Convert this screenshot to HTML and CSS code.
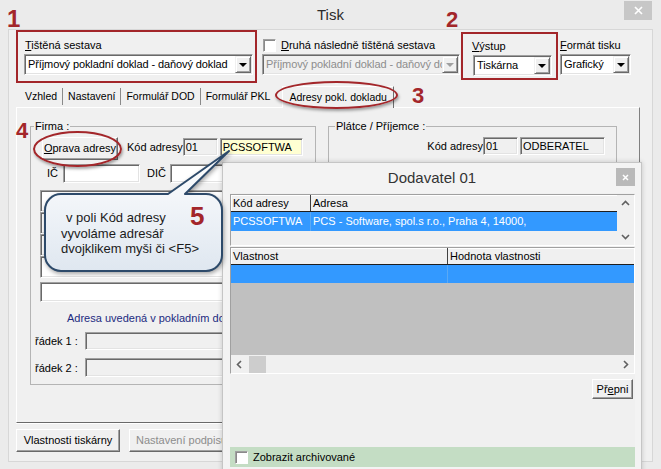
FILE: index.html
```html
<!DOCTYPE html>
<html lang="cs">
<head>
    <meta charset="UTF-8">
    <title>Tisk</title>
    <link rel="stylesheet" href="styles.css">
</head>
<body>
    <div class="window">
        <div class="titlebar">
            <span class="title">Tisk</span>
            <span class="close-btn main-close">
                <svg width="9" height="9" viewBox="0 0 9 9"><path d="M1 1 L8 8 M8 1 L1 8" stroke="#fff" stroke-width="1.7"/></svg>
            </span>
        </div>

        <div class="client">
            <div class="top-row">
                <div class="mark-box report">
                    <div class="caption"><u>T</u>ištěná sestava</div>
                    <div class="combo"><span class="combo-text">Příjmový pokladní doklad - daňový doklad</span><span class="drop"></span></div>
                </div>
                <div class="second">
                    <div class="caption check-caption"><span class="check"></span><u>D</u>ruhá následně tištěná sestava</div>
                    <div class="combo disabled"><span class="combo-text">Příjmový pokladní doklad - daňový do</span><span class="drop"></span></div>
                </div>
                <div class="mark-box output">
                    <div class="caption"><u>V</u>ýstup</div>
                    <div class="combo"><span class="combo-text">Tiskárna</span><span class="drop"></span></div>
                </div>
                <div class="format">
                    <div class="caption"><u>F</u>ormát tisku</div>
                    <div class="combo"><span class="combo-text">Grafický</span><span class="drop"></span></div>
                </div>
            </div>

            <div class="tabs">
                <div class="tab">Vzhled</div>
                <div class="tab">Nastavení</div>
                <div class="tab">Formulář DOD</div>
                <div class="tab last">Formulář PKL</div>
                <div class="tab active">Adresy pokl. dokladu</div>
            </div>

            <div class="panel">
                <div class="groups">
                    <fieldset class="group firma">
                        <legend>Firma :</legend>
                        <div class="row first-row">
                            <div class="btn btn-oprava"><u>O</u>prava adresy</div>
                            <span class="lbl lbl-kod">Kód adresy</span>
                            <div class="edit gray e-code">01</div>
                            <div class="edit yellow e-name">PCSSOFTWA</div>
                        </div>
                        <div class="row ic-row">
                            <span class="lbl lbl-ic">IČ</span>
                            <div class="edit e-ic"></div>
                            <span class="lbl lbl-dic">DIČ</span>
                            <div class="edit e-dic"></div>
                        </div>
                        <div class="memo">
                            <div class="edit tall"></div>
                            <div class="edit tall"></div>
                            <div class="edit tall"></div>
                            <div class="edit tall"></div>
                        </div>
                        <div class="edit single"></div>
                        <div class="note">Adresa uvedená v pokladním dokladu</div>
                        <div class="row line-row">
                            <span class="lbl lbl-line">řádek 1 :</span>
                            <div class="edit gray e-line"></div>
                        </div>
                        <div class="row line-row second-line">
                            <span class="lbl lbl-line">řádek 2 :</span>
                            <div class="edit gray e-line h19"></div>
                        </div>
                    </fieldset>

                    <fieldset class="group platce">
                        <legend>Plátce / Příjemce :</legend>
                        <div class="row first-row right">
                            <span class="lbl lbl-kod2">Kód adresy</span>
                            <div class="edit gray e-code">01</div>
                            <div class="edit gray e-name2">ODBERATEL</div>
                        </div>
                    </fieldset>
                </div>
            </div>

            <div class="bottom">
                <div class="btn btn-printer">Vlastnosti tiskárny</div>
                <div class="btn btn-sign disabled-text">Nastavení podpisu</div>
            </div>
        </div>
    </div>

    <!-- oznaceni v obrazku -->
    <span class="num n1">1</span>
    <span class="num n2">2</span>
    <span class="num n3">3</span>
    <span class="num n4">4</span>
    <span class="oval oval-tab"></span>
    <span class="oval oval-oprava"></span>

    <div class="dialog">
        <div class="dlg-title">
            Dodavatel 01
            <span class="close-btn dlg-close">
                <svg width="7" height="7" viewBox="0 0 7 7"><path d="M1 1 L6 6 M6 1 L1 6" stroke="#fff" stroke-width="1.5"/></svg>
            </span>
        </div>
        <div class="dlg-client">
            <div class="grid grid-addr">
                <div class="grid-body">
                    <div class="g-head">
                        <div class="g-cell c-code">Kód adresy</div>
                        <div class="g-cell">Adresa</div>
                    </div>
                    <div class="g-row selected">
                        <div class="g-cell c-code">PCSSOFTWA</div>
                        <div class="g-cell">PCS - Software, spol.s r.o., Praha 4, 14000,</div>
                    </div>
                </div>
                <div class="vscroll">
                    <span class="arrow"><svg width="17" height="17" viewBox="0 0 17 17"><polyline points="5,10 8.5,6.5 12,10" fill="none" stroke="#606060" stroke-width="1.6"/></svg></span>
                    <span class="arrow"><svg width="17" height="17" viewBox="0 0 17 17"><polyline points="5,7 8.5,10.5 12,7" fill="none" stroke="#606060" stroke-width="1.6"/></svg></span>
                </div>
            </div>

            <div class="grid grid-props">
                <div class="g-head">
                    <div class="g-cell c-prop">Vlastnost</div>
                    <div class="g-cell">Hodnota vlastnosti</div>
                </div>
                <div class="g-row selected short">
                    <div class="g-cell c-prop"></div>
                    <div class="g-cell"></div>
                </div>
                <div class="g-empty"></div>
                <div class="hscroll">
                    <span class="arrow"><svg width="17" height="17" viewBox="0 0 17 17"><polyline points="10,5 6.5,8.5 10,12" fill="none" stroke="#606060" stroke-width="1.6"/></svg></span>
                    <span class="thumb"></span>
                    <span class="spacer"></span>
                    <span class="arrow"><svg width="17" height="17" viewBox="0 0 17 17"><polyline points="7,5 10.5,8.5 7,12" fill="none" stroke="#606060" stroke-width="1.6"/></svg></span>
                </div>
            </div>

            <div class="dlg-actions">
                <div class="btn btn-switch">Př<u>e</u>pni</div>
            </div>

            <div class="archive-bar">
                <span class="check"></span>
                <span>Zobrazit archivované</span>
            </div>
        </div>
    </div>

    <div class="callout">
        <svg class="callout-shape" width="200" height="140" viewBox="0 0 200 140">
            <defs>
                <linearGradient id="calloutFill" x1="0" y1="0" x2="0" y2="1">
                    <stop offset="0" stop-color="#ffffff"/>
                    <stop offset="1" stop-color="#dfe7f0"/>
                </linearGradient>
            </defs>
            <path d="M21 54 H128 L189 11 L145 54 H166 A16 16 0 0 1 182 70 V115 A16 16 0 0 1 166 131 H21 A16 16 0 0 1 5 115 V70 A16 16 0 0 1 21 54 Z"
                  fill="url(#calloutFill)" stroke="#2d4a6a" stroke-width="2" stroke-linejoin="round"/>
        </svg>
        <div class="callout-text">
            <div class="indent">v poli Kód adresy</div>
            <div>vyvoláme adresář</div>
            <div>dvojklikem myši či &lt;F5&gt;</div>
        </div>
        <span class="callout-num">5</span>
    </div>
</body>
</html>
```

FILE: styles.css
```css
* {
    margin: 0;
    padding: 0;
    box-sizing: border-box;
}

body {
    width: 661px;
    height: 469px;
    overflow: hidden;
    position: relative;
    font-family: "Liberation Sans", Arial, sans-serif;
    font-size: 11px;
    color: #000;
    background: #ebebeb;
}

u {
    text-decoration: underline;
}

/* hlavni okno */
.window {
    height: 469px;
    display: flex;
    flex-direction: column;
}

.titlebar {
    height: 29px;
    position: relative;
    text-align: center;
}

.title {
    font-size: 15px;
    line-height: 29px;
    color: #2b2b2b;
}

.close-btn {
    position: absolute;
    display: flex;
    align-items: center;
    justify-content: center;
}

.main-close {
    left: 624px;
    top: 1px;
    width: 28px;
    height: 19px;
    background: #c7c7c7;
}

.client {
    flex: 1;
    margin: 0 8px 7px;
    background: #f0f0f0;
    border: 1px solid #d7d7d7;
}

/* horni radek */
.top-row {
    display: flex;
    align-items: flex-start;
    height: 53px;
}

.mark-box {
    border: 2px solid #a3262a;
}

.caption {
    height: 13px;
    line-height: 13px;
    margin-bottom: 2px;
    white-space: nowrap;
}

.report {
    margin-left: 7px;
    width: 241px;
    height: 53px;
    padding: 7px 2px 0 6px;
}

.report .caption {
    padding-left: 1px;
}

.second {
    margin-left: 5px;
    width: 198px;
    padding-top: 9px;
}

.check-caption {
    display: flex;
    align-items: center;
}

.check {
    display: inline-block;
    width: 13px;
    height: 13px;
    background: #fff;
    border: 1px solid;
    border-color: #a0a0a0 #fff #fff #a0a0a0;
    box-shadow: inset 1px 1px 0 #8a8a8a;
}

.check-caption .check {
    margin: 0 5px 0 1px;
}

.output {
    margin-left: 1px;
    margin-top: 2px;
    width: 97px;
    height: 48px;
    padding: 6px 0 0 10px;
}

.output .caption {
    margin-left: -1px;
}

.output .combo {
    width: 79px;
}

.format {
    margin-left: 2px;
    width: 71px;
    padding-top: 9px;
}

.combo {
    display: flex;
    height: 21px;
    background: #fff;
    border: 1px solid;
    border-color: #a0a0a0 #fff #fff #a0a0a0;
    padding: 1px;
    box-shadow: inset 1px 1px 0 #696969, inset -1px -1px 0 #e3e3e3;
}

.combo-text {
    flex: 1;
    line-height: 17px;
    padding-left: 2px;
    letter-spacing: -0.1px;
    white-space: nowrap;
    overflow: hidden;
}

.drop {
    width: 16px;
    height: 17px;
    flex-shrink: 0;
    background: #f0f0f0;
    border: 1px solid;
    border-color: #f0f0f0 #696969 #696969 #f0f0f0;
    box-shadow: inset 1px 1px 0 #fff, inset -1px -1px 0 #a0a0a0;
    display: flex;
    align-items: center;
    justify-content: center;
}

.drop::after {
    content: "";
    border-left: 4px solid transparent;
    border-right: 4px solid transparent;
    border-top: 4px solid #000;
    margin-top: 1px;
}

.combo.disabled {
    background: #f0f0f0;
}

.combo.disabled .combo-text {
    color: #8d8d8d;
}

.combo.disabled .drop::after {
    border-top-color: #a0a0a0;
}

/* zalozky */
.tabs {
    display: flex;
    align-items: flex-end;
    height: 24px;
    margin-left: 11px;
    font-size: 10.5px;
}

.tab {
    height: 17px;
    line-height: 17px;
    padding: 0 5px;
    margin-bottom: 2px;
    border-right: 1px solid #8a8a8a;
    white-space: nowrap;
}

.tab.last {
    border-right: none;
}

.tab.active {
    height: 22px;
    line-height: 20px;
    margin-left: 7px;
    margin-bottom: -1px;
    padding: 0 6px;
    background: #f0f0f0;
    border: 1px solid;
    border-color: #fff #6e6e6e transparent #fff;
    border-bottom: none;
    position: relative;
    z-index: 1;
}

.panel {
    margin-left: 7px;
    width: 624px;
    height: 316px;
    border: 1px solid;
    border-color: #fff #808080 #696969 #fff;
    box-shadow: 0 1px 0 #fff;
    padding: 12px 0 0 13px;
}

.groups {
    display: flex;
}

.group {
    border: 1px solid #b4b4b4;
    padding: 0;
}

.group legend {
    line-height: 13px;
    padding: 0 1px;
}

.firma {
    width: 286px;
    padding-bottom: 7px;
}

.firma legend {
    margin-left: 3px;
}

.platce {
    margin-left: 12px;
    width: 289px;
}

.platce legend {
    margin-left: 6px;
}

.row {
    display: flex;
    align-items: flex-start;
}

.first-row {
    margin-top: 4px;
}

.right {
    justify-content: flex-end;
    padding-right: 11px;
}

.lbl {
    white-space: nowrap;
}

.btn {
    height: 23px;
    line-height: 21px;
    text-align: center;
    white-space: nowrap;
    background: #f0f0f0;
    border: 1px solid;
    border-color: #fff #696969 #696969 #fff;
    box-shadow: inset -1px -1px 0 #a0a0a0;
}

.btn-oprava {
    margin-left: 11px;
    width: 76px;
}

.lbl-kod {
    margin-left: 9px;
    margin-top: 1px;
    line-height: 18px;
}

.lbl-kod2 {
    line-height: 18px;
}

.edit {
    height: 18px;
    line-height: 16px;
    padding-left: 2px;
    background: #fff;
    border: 1px solid;
    border-color: #a0a0a0 #fff #fff #a0a0a0;
    box-shadow: inset 1px 1px 0 #696969, inset -1px -1px 0 #e3e3e3;
    white-space: nowrap;
    overflow: hidden;
}

.edit.gray {
    background: #f0f0f0;
}

.edit.yellow {
    background: #ffffd2;
}

.first-row .e-code {
    width: 35px;
    margin-top: 1px;
}

.e-name {
    width: 83px;
    margin-left: 2px;
    margin-top: 1px;
}

.e-name2 {
    width: 85px;
    margin-left: 2px;
}

.platce .e-code {
    margin-top: 0;
}

.ic-row {
    margin-top: 4px;
}

.ic-row .lbl {
    line-height: 19px;
}

.ic-row .edit {
    height: 19px;
}

.lbl-ic {
    margin-left: 16px;
}

.e-ic {
    width: 77px;
    margin-left: 5px;
}

.lbl-dic {
    margin-left: 7px;
}

.e-dic {
    width: 135px;
    margin-left: 4px;
}

.memo {
    margin: 7px 0 0 9px;
    width: 265px;
}

.edit.tall {
    height: 22px;
}

.edit.single {
    height: 20px;
    width: 265px;
    margin: 4px 0 0 9px;
}

.note {
    margin-top: 10px;
    padding-left: 36px;
    line-height: 13px;
    color: #1c2a80;
    white-space: nowrap;
}

.line-row {
    margin-top: 7px;
    align-items: center;
}

.line-row.second-line {
    margin-top: 8px;
}

.lbl-line {
    margin-left: 4px;
    width: 50px;
}

.e-line {
    width: 220px;
}

.e-line.h19 {
    height: 19px;
}

.bottom {
    display: flex;
    margin: 6px 0 0 7px;
}

.btn-printer {
    width: 104px;
}

.btn-sign {
    width: 105px;
    margin-left: 9px;
}

.disabled-text {
    color: #8d8d8d;
}

/* cisla a ovaly */
.num {
    position: absolute;
    font-weight: bold;
    color: #a3262a;
    line-height: 1;
    z-index: 7;
}

.n1 {
    left: 7px;
    top: 7px;
    font-size: 24px;
}

.n2 {
    left: 446px;
    top: 9px;
    font-size: 22px;
}

.n3 {
    left: 412px;
    top: 85px;
    font-size: 22px;
}

.n4 {
    left: 16px;
    top: 120px;
    font-size: 22px;
}

.oval {
    position: absolute;
    border: 2px solid #a3262a;
    border-radius: 50%;
    box-shadow: 1px 2px 3px rgba(0, 0, 0, 0.35);
    z-index: 4;
}

.oval-tab {
    left: 275px;
    top: 81px;
    width: 123px;
    height: 28px;
}

.oval-oprava {
    left: 33px;
    top: 131px;
    width: 89px;
    height: 36px;
}

/* okno Dodavatel */
.dialog {
    position: absolute;
    left: 222px;
    top: 162px;
    width: 420px;
    height: 320px;
    background: #f3f3f3;
    border: 1px solid #c5c5c5;
    box-shadow: 0 0 5px rgba(0, 0, 0, 0.18);
    z-index: 5;
}

.dlg-title {
    height: 30px;
    line-height: 30px;
    text-align: center;
    font-size: 15px;
    color: #333;
    position: relative;
}

.dlg-close {
    left: 393px;
    top: 5px;
    width: 19px;
    height: 18px;
    background: #b9b9b9;
}

.dlg-client {
    margin: 0 6px 0 7px;
    background: #f0f0f0;
    padding-top: 1px;
}

.grid {
    border: 1px solid;
    border-color: #a0a0a0 #fff #fff #a0a0a0;
    background: #f0f0f0;
}

.grid-addr {
    display: flex;
    height: 52px;
}

.grid-body {
    flex: 1;
}

.g-head {
    display: flex;
    height: 17px;
    border-bottom: 1px solid #1e1e1e;
    box-shadow: inset 1px 1px 0 #fff;
}

.g-cell {
    padding-left: 2px;
    line-height: 16px;
    white-space: nowrap;
    overflow: hidden;
}

.g-head .g-cell {
    border-right: 1px solid #404040;
}

.g-head .g-cell:last-child {
    border-right: none;
    flex: 1;
}

.c-code {
    width: 80px;
    flex-shrink: 0;
}

.c-prop {
    width: 217px;
    flex-shrink: 0;
}

.g-row {
    display: flex;
    height: 19px;
}

.g-row .g-cell {
    line-height: 19px;
}

.g-row .g-cell:first-child {
    border-right: 1px solid #5aa9f5;
}

.g-row .g-cell:last-child {
    flex: 1;
}

.selected {
    background: #3399ff;
    color: #fff;
}

.g-row.short {
    height: 18px;
}

.vscroll {
    width: 17px;
    display: flex;
    flex-direction: column;
    justify-content: space-between;
}

.arrow {
    display: block;
    width: 17px;
    height: 17px;
}

.arrow svg {
    display: block;
}

.grid-props {
    margin-top: 1px;
    height: 127px;
    display: flex;
    flex-direction: column;
}

.g-empty {
    height: 72px;
    background: #c0c0c0;
}

.hscroll {
    height: 18px;
    display: flex;
    align-items: center;
}

.thumb {
    width: 17px;
    height: 17px;
    margin-left: 1px;
    background: #cdcdcd;
}

.spacer {
    flex: 1;
}

.dlg-actions {
    display: flex;
    justify-content: flex-end;
    margin-top: 5px;
    padding-right: 2px;
}

.btn-switch {
    width: 41px;
    height: 20px;
    line-height: 18px;
}

.archive-bar {
    margin-top: 48px;
    height: 20px;
    display: flex;
    align-items: center;
    padding-left: 5px;
    background: #c4ddc4;
}

.archive-bar .check {
    margin-right: 5px;
}

/* bublina */
.callout {
    position: absolute;
    left: 40px;
    top: 140px;
    width: 200px;
    height: 140px;
    z-index: 6;
}

.callout-shape {
    position: absolute;
    left: 0;
    top: 0;
    filter: drop-shadow(1px 2px 2px rgba(0, 0, 0, 0.35));
}

.callout-text {
    position: relative;
    padding: 70px 0 0 21px;
    font-size: 13px;
    line-height: 15.5px;
    color: #1b1b1b;
    white-space: nowrap;
}

.callout-text .indent {
    padding-left: 5px;
}

.callout-num {
    position: absolute;
    left: 150px;
    top: 63px;
    font-size: 26px;
    line-height: 26px;
    font-weight: bold;
    color: #a3262a;
}
```
